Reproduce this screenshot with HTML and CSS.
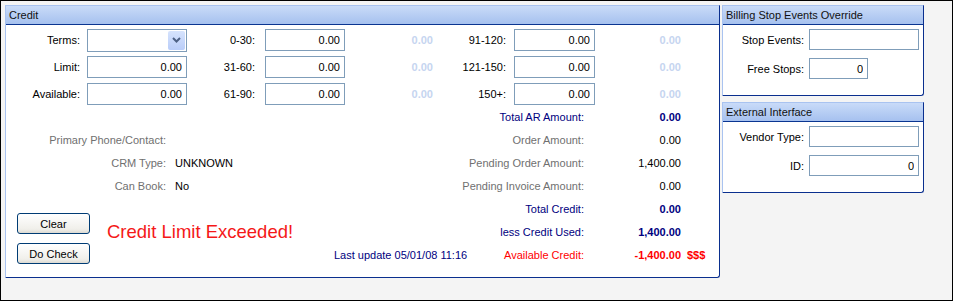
FILE: index.html
```html
<!DOCTYPE html>
<html lang="en">
<head>
    <meta charset="UTF-8">
    <title>Credit</title>
    <link rel="stylesheet" href="styles.css">
</head>
<body>
<div class="screen">

    <div class="panel credit">
        <div class="panel-head">Credit</div>

        <div class="aging">
            <label>Terms:</label>
            <div class="combo">
                <span class="drop">
                    <svg width="9" height="6" viewBox="0 0 9 6"><path d="M1 1 L4.5 4.5 L8 1" fill="none" stroke="#4d6185" stroke-width="2"/></svg>
                </span>
            </div>
            <label>0-30:</label>
            <input class="txt w80" type="text" value="0.00">
            <span class="faint">0.00</span>
            <label>91-120:</label>
            <input class="txt w81" type="text" value="0.00">
            <span class="faint">0.00</span>

            <label>Limit:</label>
            <input class="txt w100" type="text" value="0.00">
            <label>31-60:</label>
            <input class="txt w80" type="text" value="0.00">
            <span class="faint">0.00</span>
            <label>121-150:</label>
            <input class="txt w81" type="text" value="0.00">
            <span class="faint">0.00</span>

            <label>Available:</label>
            <input class="txt w100" type="text" value="0.00">
            <label>61-90:</label>
            <input class="txt w80" type="text" value="0.00">
            <span class="faint">0.00</span>
            <label>150+:</label>
            <input class="txt w81" type="text" value="0.00">
            <span class="faint">0.00</span>
        </div>

        <div class="summary">
            <span class="lbl gray r2 c1">Primary Phone/Contact:</span>
            <span class="lbl gray r3 c1">CRM Type:</span>
            <span class="val r3 c2">UNKNOWN</span>
            <span class="lbl gray r4 c1">Can Book:</span>
            <span class="val r4 c2">No</span>

            <div class="actions">
                <div class="btns">
                    <button class="btn">Clear</button>
                    <button class="btn">Do Check</button>
                </div>
                <div class="alert">Credit Limit Exceeded!</div>
            </div>

            <span class="updated">Last update 05/01/08 11:16</span>

            <span class="rlbl navy r1">Total AR Amount:</span>
            <span class="amt navy bold r1">0.00</span>
            <span class="rlbl gray r2">Order Amount:</span>
            <span class="amt r2">0.00</span>
            <span class="rlbl gray r3">Pending Order Amount:</span>
            <span class="amt r3">1,400.00</span>
            <span class="rlbl gray r4">Pending Invoice Amount:</span>
            <span class="amt r4">0.00</span>
            <span class="rlbl navy r5">Total Credit:</span>
            <span class="amt navy bold r5">0.00</span>
            <span class="rlbl navy r6">less Credit Used:</span>
            <span class="amt navy bold r6">1,400.00</span>
            <span class="rlbl red avail r7">Available Credit:</span>
            <span class="amt red bold r7">-1,400.00</span>
            <span class="suffix red bold r7">$$$</span>
        </div>
    </div>

    <div class="side">
        <div class="panel small">
            <div class="panel-head">Billing Stop Events Override</div>
            <div class="form">
                <label>Stop Events:</label>
                <input class="txt w110" type="text" value="">
                <label>Free Stops:</label>
                <input class="txt w59" type="text" value="0">
            </div>
        </div>
        <div class="panel small">
            <div class="panel-head">External Interface</div>
            <div class="form">
                <label>Vendor Type:</label>
                <input class="txt w110" type="text" value="">
                <label>ID:</label>
                <input class="txt w110" type="text" value="0">
            </div>
        </div>
    </div>

</div>
</body>
</html>
```

FILE: styles.css
```css
* {
    box-sizing: border-box;
}
body {
    margin: 0;
    height: 301px;
    border: 1px solid #000;
    background-color: #f4f4f4;
    font-family: "Liberation Sans", Arial, sans-serif;
    font-size: 11px;
    color: #000;
}
.screen {
    display: flex;
    align-items: flex-start;
    gap: 2px;
    padding: 4px 0 0 4px;
}

/* panels */
.panel {
    background-color: #fff;
    border: 1px solid;
    border-color: #a9c3f0 #0a2f8e #0a2f8e #a9c3f0;
    border-bottom-right-radius: 3px;
}
.panel-head {
    height: 19px;
    line-height: 18px;
    padding-left: 3px;
    background: linear-gradient(#c9dbf8, #a6c1ef);
    border-bottom: 1px solid #0a3591;
    color: #111;
}
.credit {
    width: 715px;
    height: 273px;
}
.side {
    display: flex;
    flex-direction: column;
    gap: 6px;
}
.small {
    width: 202px;
    height: 91px;
}

/* inputs */
.txt {
    height: 22px;
    border: 1px solid #7f9db9;
    background-color: #fff;
    font-family: inherit;
    font-size: 11px;
    text-align: right;
    padding: 0 4px;
    margin: 0;
    color: #000;
}
.w100 { width: 100px; margin-left: 7px; }
.w80 { width: 80px; margin-left: 10px; }
.w81 { width: 81px; margin-left: 8px; }
.w110 { width: 110px; }
.w59 { width: 59px; }

.combo {
    width: 100px;
    height: 23px;
    margin-left: 7px;
    border: 1px solid #7f9db9;
    display: flex;
    justify-content: flex-end;
    align-items: center;
    padding-right: 1px;
}
.drop {
    width: 17px;
    height: 19px;
    border-radius: 2px;
    background: linear-gradient(#d6e3fd, #b9cdf9);
    display: flex;
    justify-content: center;
    align-items: center;
}

/* aging grid */
.aging {
    display: grid;
    grid-template-columns: 74px 107px 68px 90px 88px 73px 89px 86px;
    grid-auto-rows: 22px;
    row-gap: 5px;
    align-items: center;
    padding-top: 4px;
}
.aging label {
    text-align: right;
}
.faint {
    text-align: right;
    color: #c6d5f0;
    font-weight: bold;
}

/* summary grid */
.summary {
    display: grid;
    grid-template-columns: 160px 164px 144px 110px 97px 40px;
    grid-template-rows: repeat(7, 23px);
    align-items: center;
}
.r1 { grid-row: 1; }
.r2 { grid-row: 2; }
.r3 { grid-row: 3; }
.r4 { grid-row: 4; }
.r5 { grid-row: 5; }
.r6 { grid-row: 6; }
.r7 { grid-row: 7; }
.c1 { grid-column: 1; }
.c2 { grid-column: 2; }
.lbl {
    text-align: right;
}
.val {
    padding-left: 9px;
}
.rlbl {
    grid-column: 3 / 5;
    text-align: right;
}
.avail {
    grid-column: 4;
}
.amt {
    grid-column: 5;
    text-align: right;
}
.suffix {
    grid-column: 6;
    padding-left: 6px;
}
.updated {
    grid-column: 3;
    grid-row: 7;
    padding-left: 4px;
    color: #000080;
}
.gray { color: #707070; }
.navy { color: #000080; }
.red { color: #ff0000; }
.bold { font-weight: bold; }

.actions {
    grid-column: 1 / 3;
    grid-row: 5 / 8;
    align-self: stretch;
    display: flex;
    align-items: center;
}
.btns {
    display: flex;
    flex-direction: column;
    gap: 9px;
    margin-left: 11px;
    align-self: flex-start;
    margin-top: 16px;
}
.btn {
    width: 73px;
    height: 21px;
    border: 1px solid #003c74;
    border-radius: 3px;
    background: linear-gradient(#ffffff, #f0efea 80%, #dcdad2);
    font-family: inherit;
    font-size: 11px;
    color: #000;
    padding: 0;
}
.alert {
    margin-left: 17px;
    color: #f51818;
    font-size: 18.5px;
}

/* side forms */
.form {
    display: grid;
    grid-template-columns: 81px auto;
    column-gap: 5px;
    row-gap: 8px;
    align-items: center;
    justify-items: start;
    padding-top: 4px;
}
.form label {
    justify-self: end;
}
.form .txt {
    height: 21px;
}
```
